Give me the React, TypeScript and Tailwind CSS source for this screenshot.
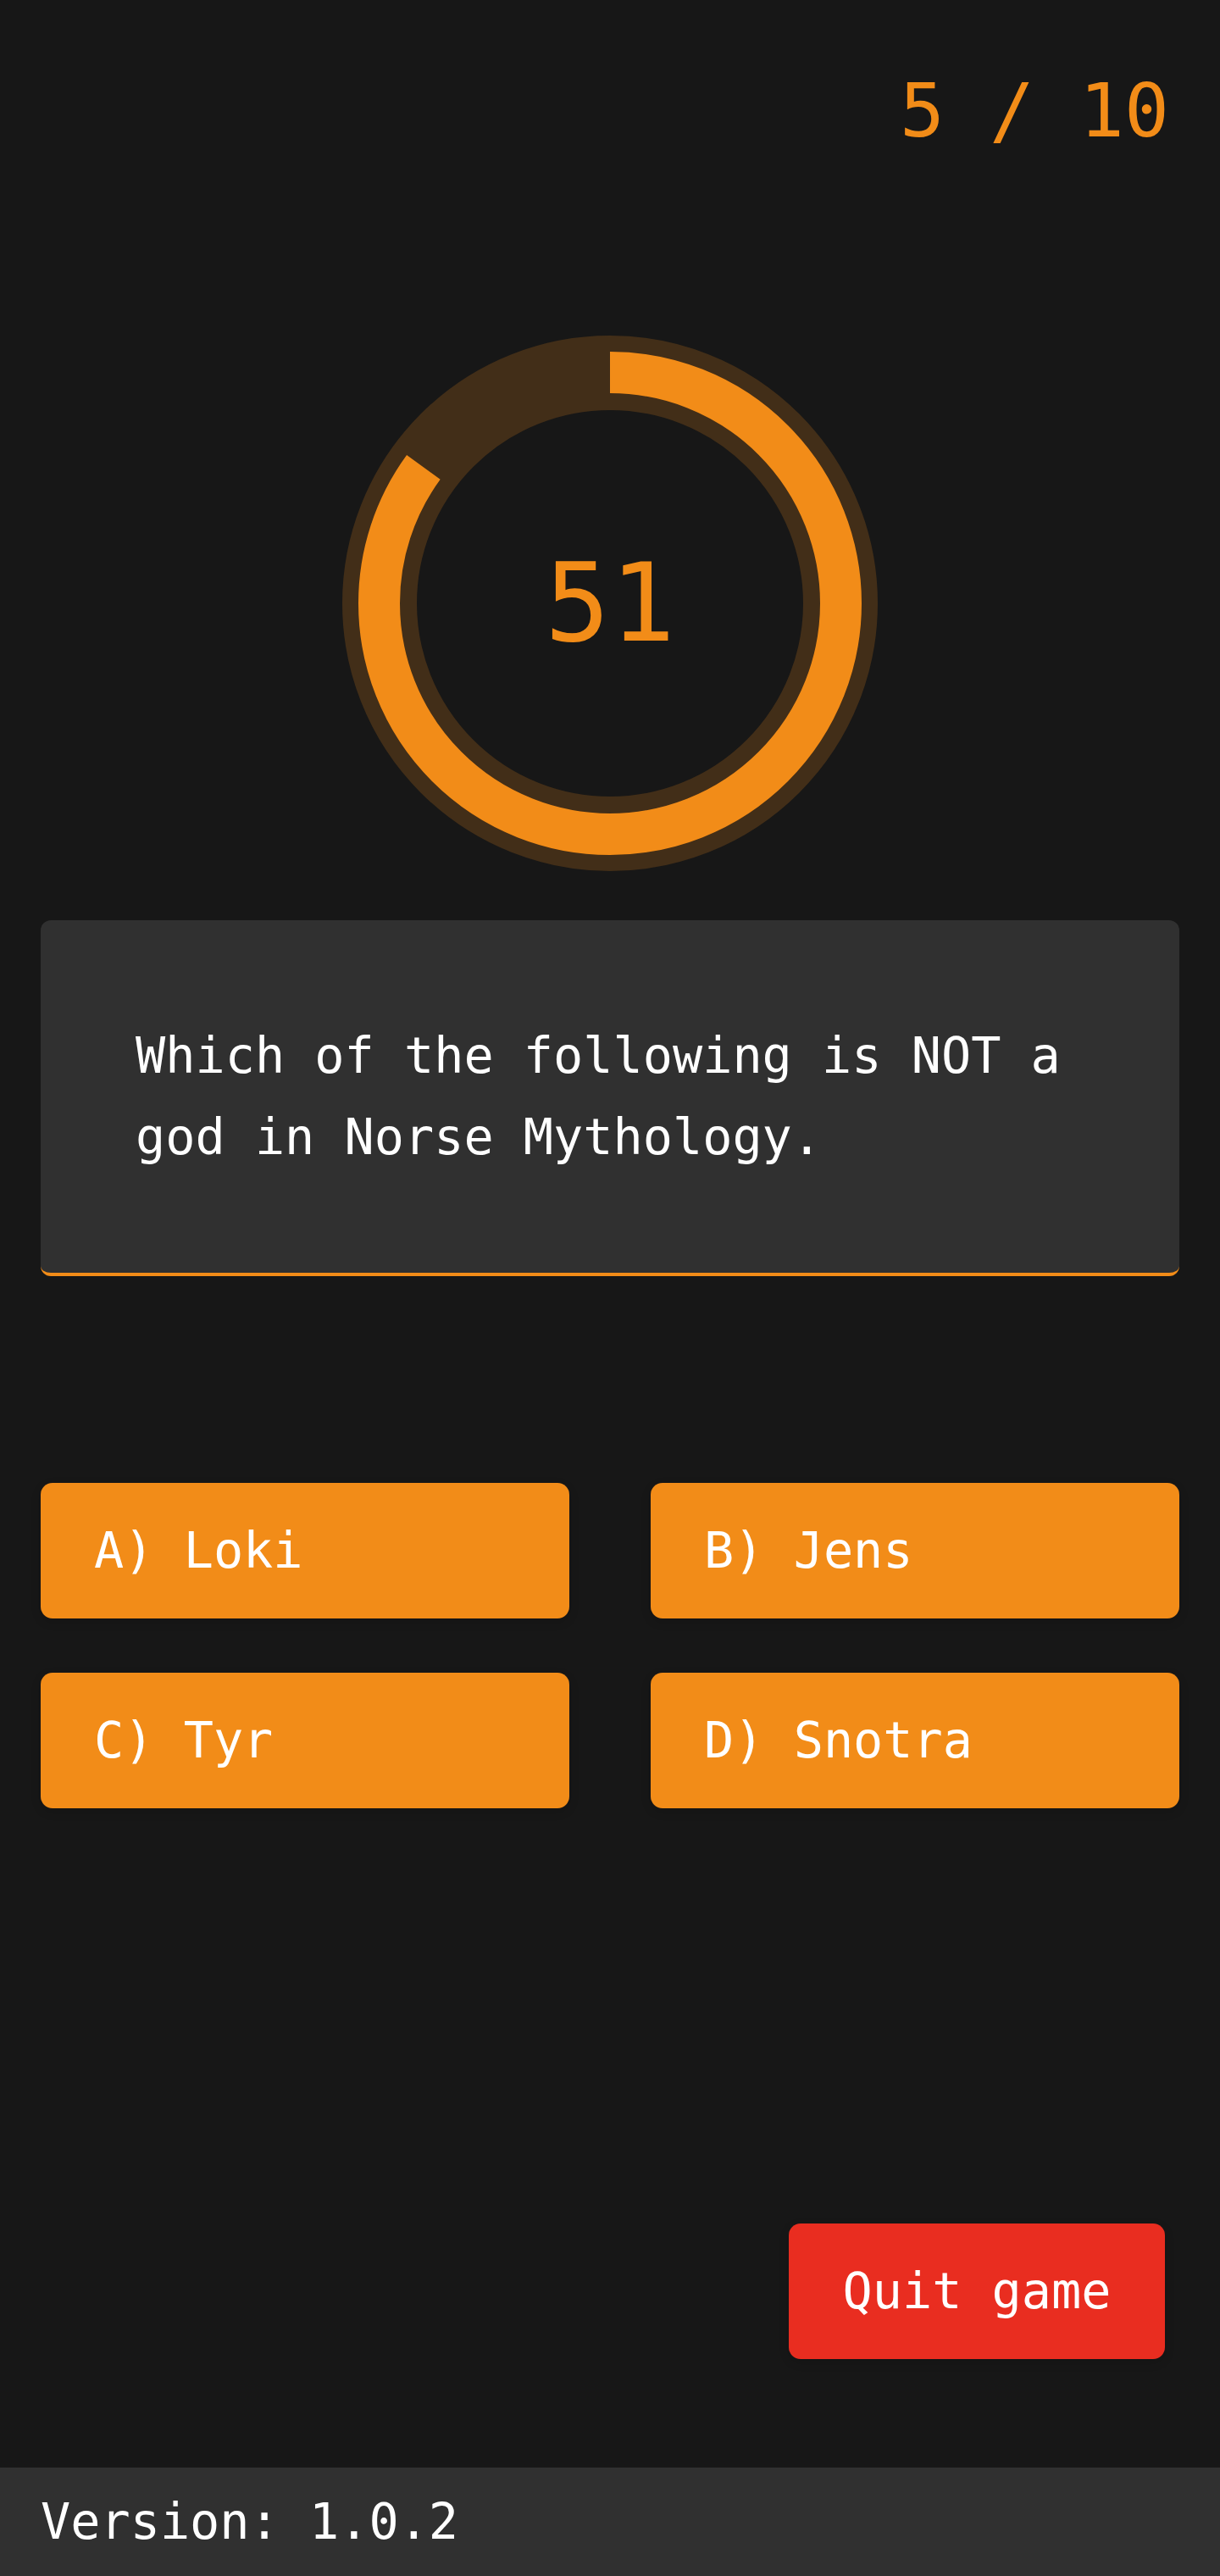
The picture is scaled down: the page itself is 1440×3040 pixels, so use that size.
import React from "react";

const MONO = "font-['DejaVu_Sans_Mono','Liberation_Mono',monospace]";

function Timer({ seconds, total }: { seconds: number; total: number }) {
  const r = 272.5;
  const c = 2 * Math.PI * r;
  const frac = seconds / total;
  return (
    <div className="relative w-[640px] h-[640px]">
      <svg width="640" height="640" viewBox="0 0 640 640" className="block">
        <circle cx="320" cy="320" r="272" fill="none" stroke="#422e18" strokeWidth="88" />
        <circle
          cx="320"
          cy="320"
          r={r}
          fill="none"
          stroke="#f28c18"
          strokeWidth="49"
          strokeDasharray={`${c * frac} ${c}`}
          transform="rotate(-90 320 320)"
        />
      </svg>
      <div className="absolute inset-0 flex items-center justify-center">
        <span className="text-[128px] leading-none text-[#f28c18]">{seconds}</span>
      </div>
    </div>
  );
}

export default function App() {
  const answers = ["A) Loki", "B) Jens", "C) Tyr", "D) Snotra"];
  return (
    <div className={`${MONO} bg-[#171717] w-[1440px] h-[3040px] flex flex-col`}>
      <div className="flex justify-end pr-[60px] pt-[87px]">
        <span className="text-[88px] leading-none text-[#f28c18] whitespace-pre">5 / 10</span>
      </div>
      <div className="flex justify-center mt-[217px]">
        <Timer seconds={51} total={60} />
      </div>
      <div className="mx-[48px] mt-[54px] bg-[#303030] rounded-xl border-b-4 border-[#f28c18] p-[112px]">
        <p className="text-[58.5px] leading-[96px] text-white">
          Which of the following is NOT a god in Norse Mythology.
        </p>
      </div>
      <div className="mx-[48px] mt-[244px] grid grid-cols-2 gap-x-[96px] gap-y-[64px]">
        {answers.map((a) => (
          <button
            key={a}
            className="h-[160px] rounded-[14px] bg-[#f28c18] text-white text-[58.5px] leading-none text-left pl-[63px] shadow-[0_4px_12px_rgba(0,0,0,0.15)]"
          >
            {a}
          </button>
        ))}
      </div>
      <div className="flex justify-end pr-[65px] mt-[490px]">
        <button className="h-[160px] w-[444px] rounded-[14px] bg-[#e92d20] text-white text-[58.5px] leading-none shadow-[0_4px_12px_rgba(0,0,0,0.15)]">
          Quit game
        </button>
      </div>
      <div className="mt-auto h-[128px] bg-[#303030] flex items-center pl-[48px]">
        <span className="text-[58.5px] leading-none text-white">Version: 1.0.2</span>
      </div>
    </div>
  );
}
